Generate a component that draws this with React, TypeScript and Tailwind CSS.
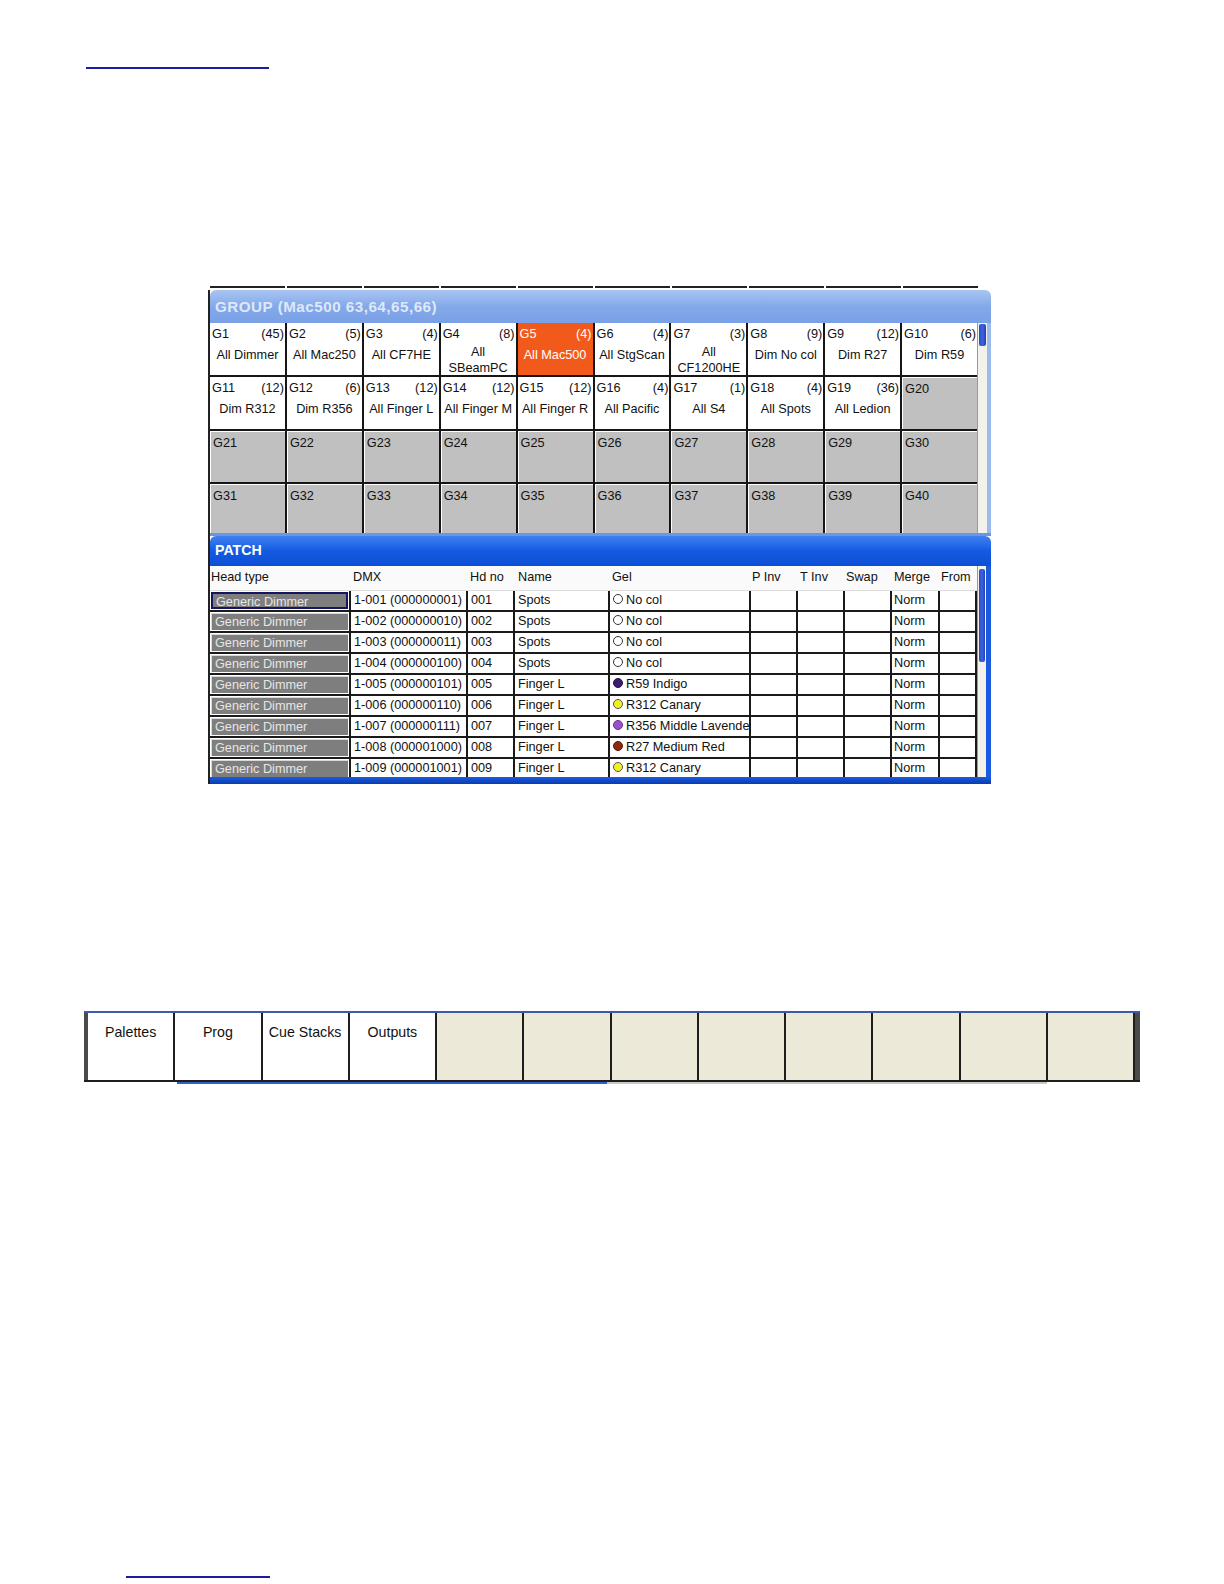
import React from 'react';

type Group = { id: number; count?: number; name?: string[] };

const groups: Group[] = [
  { id: 1, count: 45, name: ['All Dimmer'] },
  { id: 2, count: 5, name: ['All Mac250'] },
  { id: 3, count: 4, name: ['All CF7HE'] },
  { id: 4, count: 8, name: ['All', 'SBeamPC'] },
  { id: 5, count: 4, name: ['All Mac500'] },
  { id: 6, count: 4, name: ['All StgScan'] },
  { id: 7, count: 3, name: ['All', 'CF1200HE'] },
  { id: 8, count: 9, name: ['Dim No col'] },
  { id: 9, count: 12, name: ['Dim R27'] },
  { id: 10, count: 6, name: ['Dim R59'] },
  { id: 11, count: 12, name: ['Dim R312'] },
  { id: 12, count: 6, name: ['Dim R356'] },
  { id: 13, count: 12, name: ['All Finger L'] },
  { id: 14, count: 12, name: ['All Finger M'] },
  { id: 15, count: 12, name: ['All Finger R'] },
  { id: 16, count: 4, name: ['All Pacific'] },
  { id: 17, count: 1, name: ['All S4'] },
  { id: 18, count: 4, name: ['All Spots'] },
  { id: 19, count: 36, name: ['All Ledion'] },
  ...Array.from({ length: 21 }, (_, i) => ({ id: 20 + i })),
];

const gelColors: Record<string, string> = {
  'No col': 'bg-white border-[#333]',
  'R59 Indigo': 'bg-[#3b1d6b] border-[#2a1050]',
  'R312 Canary': 'bg-[#f4f020] border-[#555]',
  'R356 Middle Lavender': 'bg-[#9b50c8] border-[#6a3090]',
  'R27 Medium Red': 'bg-[#8c2a10] border-[#5a1a08]',
};

const patchRows = [
  ['1-001 (000000001)', '001', 'Spots', 'No col'],
  ['1-002 (000000010)', '002', 'Spots', 'No col'],
  ['1-003 (000000011)', '003', 'Spots', 'No col'],
  ['1-004 (000000100)', '004', 'Spots', 'No col'],
  ['1-005 (000000101)', '005', 'Finger L', 'R59 Indigo'],
  ['1-006 (000000110)', '006', 'Finger L', 'R312 Canary'],
  ['1-007 (000000111)', '007', 'Finger L', 'R356 Middle Lavender'],
  ['1-008 (000001000)', '008', 'Finger L', 'R27 Medium Red'],
  ['1-009 (000001001)', '009', 'Finger L', 'R312 Canary'],
];

const headers = [
  { label: 'Head type', w: 'w-[141px]', pl: 'pl-[1px]' },
  { label: 'DMX', w: 'w-[117px]', pl: 'pl-[2px]' },
  { label: 'Hd no', w: 'w-[47px]', pl: 'pl-[2px]' },
  { label: 'Name', w: 'w-[95px]', pl: 'pl-[3px]' },
  { label: 'Gel', w: 'w-[141px]', pl: 'pl-[2px]' },
  { label: 'P Inv', w: 'w-[47px]', pl: 'pl-[1px]' },
  { label: 'T Inv', w: 'w-[47px]', pl: 'pl-[2px]' },
  { label: 'Swap', w: 'w-[47px]', pl: 'pl-[1px]' },
  { label: 'Merge', w: 'w-[48px]', pl: 'pl-[2px]' },
  { label: 'From', w: 'w-[37px]', pl: 'pl-[1px]' },
];

const tabs = ['Palettes', 'Prog', 'Cue Stacks', 'Outputs', '', '', '', '', '', '', '', ''];

const GroupCell: React.FC<{ g: Group }> = ({ g }) => {
  const empty = !g.name;
  const selected = g.id === 5;
  const bg = selected
    ? 'bg-[#f25a1c] text-white'
    : empty
      ? 'bg-[#c0c0c0] text-[#111] border-t border-l border-white'
      : 'bg-white text-[#111]';
  const twoLine = g.name && g.name.length > 1;
  return (
    <div className={`${bg} flex flex-col text-[12.7px] leading-[16px] overflow-hidden`}>
      <div className="flex justify-between pl-[2px] pr-[1px] pt-[3px]">
        <span>G{g.id}</span>
        {g.count !== undefined && <span>({g.count})</span>}
      </div>
      {g.name && (
        <div className={`${twoLine ? 'pt-[2px]' : 'pt-[5px]'} text-center leading-[16px]`}>
          {g.name.map((n) => (
            <div key={n} className="whitespace-nowrap">{n}</div>
          ))}
        </div>
      )}
    </div>
  );
};

const Dot: React.FC<{ gel: string }> = ({ gel }) => (
  <span className={`inline-block w-[10px] h-[10px] rounded-full border ${gelColors[gel]} mr-[3px] -mt-[3px] shrink-0`} />
);

const App: React.FC = () => {
  return (
    <div className="w-full bg-white overflow-hidden pb-[6px] font-['Liberation_Sans',Arial,sans-serif]">
      {/* header link rule */}
      <div className="pt-[67px] pl-[86px]">
        <div className="w-[183px] h-[2px] bg-[#1c1ca0]" />
      </div>

      {/* Group / Patch window capture */}
      <div className="ml-[204px] mt-[217px] w-[787px] h-[498px] flex flex-col">
        <div className="h-[4px] flex items-start pl-[6px] gap-[2px]">
          {Array.from({ length: 10 }).map((_, i) => (
            <div key={i} className="w-[75px] h-[2px] bg-[#222]" />
          ))}
        </div>
        <div className="flex-1 flex">
          <div className="w-[6px] bg-white border-r-2 border-[#222]" />
          <div className="w-[781px] flex flex-col">
            {/* GROUP */}
            <div className="h-[33px] rounded-t-[6px] bg-gradient-to-b from-[#a9c5f2] via-[#84a9ea] to-[#7aa0e6] flex items-center pl-[5px] pt-[2px]">
              <span className="text-[15.2px] font-bold tracking-[0.5px] text-[#dfe8f8]">GROUP (Mac500 63,64,65,66)</span>
            </div>
            <div className="h-[210px] flex">
              <div className="grid grid-cols-[repeat(10,minmax(0,1fr))] grid-rows-[52px_52px_51px_49px] gap-[2px] bg-[#161616] w-[767px]">
                {groups.map((g) => (
                  <GroupCell key={g.id} g={g} />
                ))}
              </div>
              <div className="w-[10px] bg-[#f2f1ec] border-l border-[#999] flex flex-col pt-[1px] px-[1px]">
                <div className="h-[22px] rounded-[2px] bg-gradient-to-r from-[#2b4cc8] via-[#3d62e0] to-[#2440b8]" />
              </div>
              <div className="w-[4px] bg-[#9bbaee]" />
            </div>

            {/* PATCH */}
            <div className="h-[3px] bg-[#6c95e4]" />
            <div className="h-[30px] rounded-t-[6px] bg-gradient-to-b from-[#3f80f2] via-[#145ae2] to-[#0c4fd6] flex items-center pl-[5px]">
              <span className="text-[14.2px] font-bold text-white">PATCH</span>
            </div>
            <div className="flex">
              <div className="w-[767px] flex flex-col bg-white">
                <div className="h-[24px] flex items-center bg-[#fafafa] text-[12.7px] text-[#111]">
                  {headers.map((h) => (
                    <div key={h.label} className={`${h.w} ${h.pl} whitespace-nowrap`}>{h.label}</div>
                  ))}
                </div>
                <div className="h-[187px] overflow-hidden border-t border-[#ddd]">
                  {patchRows.map((r, i) => (
                    <div key={i} className="h-[21px] flex border-b-2 border-[#1a1a1a] text-[12.7px] text-[#111] leading-[19px]">
                      <div className="w-[141px] border-r-2 border-[#1a1a1a] p-[1px]">
                        <div className={`h-full bg-[#7e7e7e] text-[#e6e6e6] pl-[3px] leading-[16px] ${i === 0 ? 'border-2 border-[#161660]' : 'border-t border-l border-[#d8d8d8]'}`}>
                          Generic Dimmer
                        </div>
                      </div>
                      <div className="w-[117px] border-r-2 border-[#1a1a1a] pl-[3px] whitespace-nowrap">{r[0]}</div>
                      <div className="w-[47px] border-r-2 border-[#1a1a1a] pl-[3px]">{r[1]}</div>
                      <div className="w-[95px] border-r-2 border-[#1a1a1a] pl-[3px]">{r[2]}</div>
                      <div className="w-[141px] border-r-2 border-[#1a1a1a] pl-[3px] flex items-center overflow-hidden whitespace-nowrap">
                        <Dot gel={r[3]} />
                        <span>{r[3]}</span>
                      </div>
                      <div className="w-[47px] border-r-2 border-[#1a1a1a]" />
                      <div className="w-[47px] border-r-2 border-[#1a1a1a]" />
                      <div className="w-[47px] border-r-2 border-[#1a1a1a]" />
                      <div className="w-[48px] border-r-2 border-[#1a1a1a] pl-[2px]">Norm</div>
                      <div className="w-[37px] border-r-2 border-[#1a1a1a]" />
                    </div>
                  ))}
                </div>
              </div>
              <div className="w-[9px] bg-[#f2f1ec] border-l border-[#999] flex flex-col pt-[3px] px-[1px]">
                <div className="h-[93px] rounded-[2px] bg-gradient-to-r from-[#2b4cc8] via-[#3d62e0] to-[#2440b8]" />
              </div>
              <div className="w-[5px] bg-[#1a5ae0]" />
            </div>
            <div className="h-[7px] bg-gradient-to-b from-[#1a5ae0] to-[#0a3cb0]" />
          </div>
        </div>
      </div>

      {/* Tab bar */}
      <div className="ml-[84px] mt-[227px] w-[1056px] h-[73px] flex flex-col">
        <div className="h-[2px] bg-[#3c5ca8]" />
        <div className="h-[67px] flex">
          <div className="w-[4px] bg-[#4a4a4a]" />
          <div className="w-[1047px] grid grid-cols-12">
            {tabs.map((t, i) => (
              <div
                key={i}
                className={`${i < 4 ? 'bg-white' : 'bg-[#ece9d8]'} border-r-2 border-[#1e1e1e] text-center text-[14.2px] leading-[18px] pt-[10px] text-[#111] whitespace-nowrap`}
              >
                {t}
              </div>
            ))}
          </div>
          <div className="w-[5px] bg-[#4a4a4a]" />
        </div>
        <div className="h-[2px] bg-[#1e1e1e]" />
        <div className="h-[2px] flex">
          <div className="w-[93px] bg-white" />
          <div className="w-[430px] bg-[#3060c8]" />
          <div className="w-[440px] bg-[#c8c8c8]" />
        </div>
      </div>

      {/* footer link rule */}
      <div className="mt-[492px] ml-[126px] w-[144px] h-[2px] bg-[#1c1ca0]" />
    </div>
  );
};

export default App;
